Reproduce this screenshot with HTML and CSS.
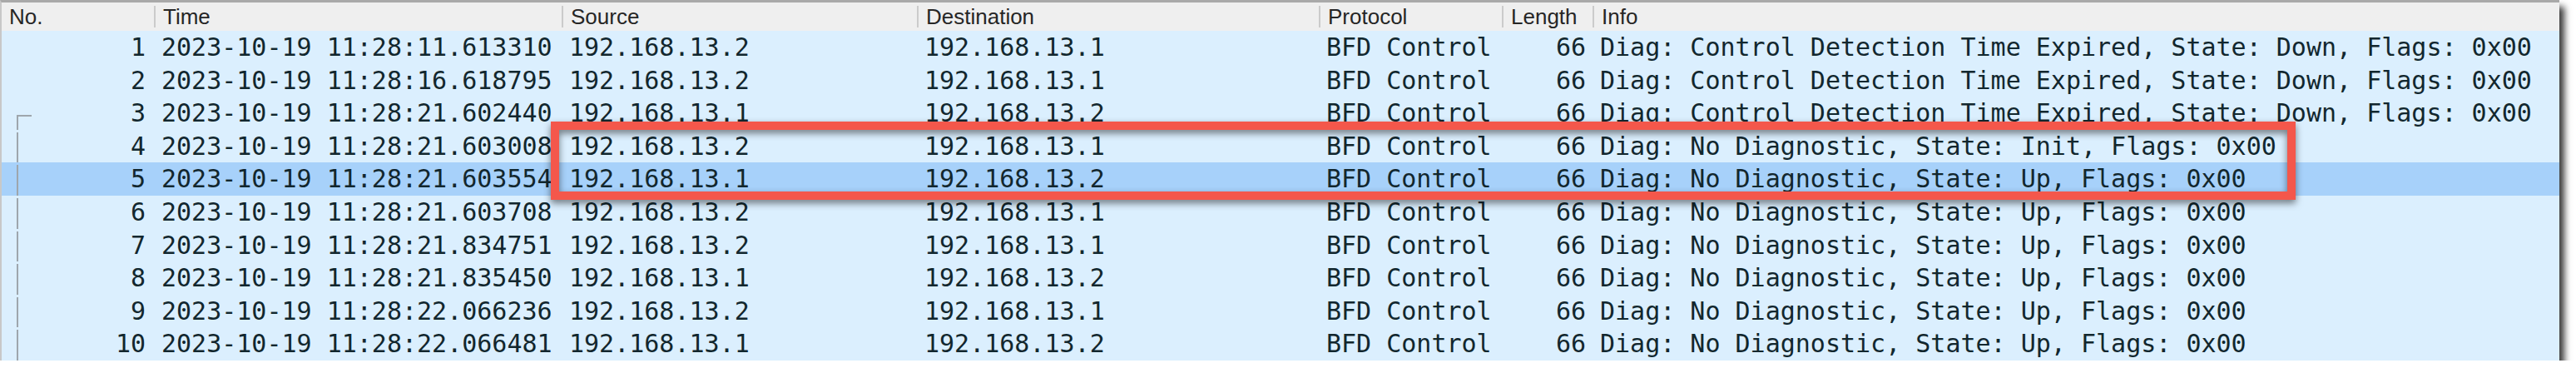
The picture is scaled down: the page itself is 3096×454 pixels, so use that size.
FILE: index.html
```html
<!DOCTYPE html>
<html>
<head>
<meta charset="utf-8">
<link rel="stylesheet" href="styles.css">
</head>
<body>
<div class="window">
  <div class="head grid">
    <div class="h first">No.</div>
    <div class="h">Time</div>
    <div class="h">Source</div>
    <div class="h">Destination</div>
    <div class="h">Protocol</div>
    <div class="h">Length</div>
    <div class="h">Info</div>
  </div>
  <div class="list">
    <div class="row grid"><div class="c num">1</div><div class="c">2023-10-19 11:28:11.613310</div><div class="c">192.168.13.2</div><div class="c">192.168.13.1</div><div class="c">BFD Control</div><div class="c len">66</div><div class="c">Diag: Control Detection Time Expired, State: Down, Flags: 0x00</div></div>
    <div class="row grid"><div class="c num">2</div><div class="c">2023-10-19 11:28:16.618795</div><div class="c">192.168.13.2</div><div class="c">192.168.13.1</div><div class="c">BFD Control</div><div class="c len">66</div><div class="c">Diag: Control Detection Time Expired, State: Down, Flags: 0x00</div></div>
    <div class="row grid"><div class="c num tree-start">3</div><div class="c">2023-10-19 11:28:21.602440</div><div class="c">192.168.13.1</div><div class="c">192.168.13.2</div><div class="c">BFD Control</div><div class="c len">66</div><div class="c">Diag: Control Detection Time Expired, State: Down, Flags: 0x00</div></div>
    <div class="row grid"><div class="c num tree">4</div><div class="c">2023-10-19 11:28:21.603008</div><div class="c">192.168.13.2</div><div class="c">192.168.13.1</div><div class="c">BFD Control</div><div class="c len">66</div><div class="c">Diag: No Diagnostic, State: Init, Flags: 0x00</div></div>
    <div class="row grid selected"><div class="c num tree">5</div><div class="c">2023-10-19 11:28:21.603554</div><div class="c">192.168.13.1</div><div class="c">192.168.13.2</div><div class="c">BFD Control</div><div class="c len">66</div><div class="c">Diag: No Diagnostic, State: Up, Flags: 0x00</div></div>
    <div class="row grid"><div class="c num tree">6</div><div class="c">2023-10-19 11:28:21.603708</div><div class="c">192.168.13.2</div><div class="c">192.168.13.1</div><div class="c">BFD Control</div><div class="c len">66</div><div class="c">Diag: No Diagnostic, State: Up, Flags: 0x00</div></div>
    <div class="row grid"><div class="c num tree">7</div><div class="c">2023-10-19 11:28:21.834751</div><div class="c">192.168.13.2</div><div class="c">192.168.13.1</div><div class="c">BFD Control</div><div class="c len">66</div><div class="c">Diag: No Diagnostic, State: Up, Flags: 0x00</div></div>
    <div class="row grid"><div class="c num tree">8</div><div class="c">2023-10-19 11:28:21.835450</div><div class="c">192.168.13.1</div><div class="c">192.168.13.2</div><div class="c">BFD Control</div><div class="c len">66</div><div class="c">Diag: No Diagnostic, State: Up, Flags: 0x00</div></div>
    <div class="row grid"><div class="c num tree">9</div><div class="c">2023-10-19 11:28:22.066236</div><div class="c">192.168.13.2</div><div class="c">192.168.13.1</div><div class="c">BFD Control</div><div class="c len">66</div><div class="c">Diag: No Diagnostic, State: Up, Flags: 0x00</div></div>
    <div class="row grid"><div class="c num tree">10</div><div class="c">2023-10-19 11:28:22.066481</div><div class="c">192.168.13.1</div><div class="c">192.168.13.2</div><div class="c">BFD Control</div><div class="c len">66</div><div class="c">Diag: No Diagnostic, State: Up, Flags: 0x00</div></div>
  </div>
  <div class="highlight"></div>
</div>
</body>
</html>
```

FILE: styles.css
```css
html, body {
  margin: 0;
  padding: 0;
  background: #ffffff;
}

.window {
  position: relative;
  width: 3076px;
  height: 433px;
  box-sizing: border-box;
  border-top: 3px solid #a9a9a9;
  border-left: 2px solid #c8c8c8;
  background: #dbeffe;
  box-shadow: 6px 8px 8px rgba(0, 0, 0, 0.78);
  overflow: hidden;
}

.grid {
  display: grid;
  grid-template-columns: 183px 490px 427px 483px 220px 109px 1fr;
}

.head {
  height: 34px;
  background: #efefef;
  align-items: center;
  font-family: "Liberation Sans", Arial, sans-serif;
  font-size: 26px;
  color: #262626;
}

.h {
  height: 26px;
  display: flex;
  align-items: center;
  border-left: 2px solid #cbcbcb;
  padding-left: 9px;
  white-space: nowrap;
  line-height: 1;
}

.h.first {
  border-left: none;
  padding-left: 9px;
}

.list {
  font-family: "DejaVu Sans Mono", "Liberation Mono", monospace;
  font-size: 30px;
  color: #12272e;
}

.row {
  height: 39.6px;
  align-items: center;
  background: #dbeffe;
}

.row.selected {
  background: #a7d1fa;
}

.c {
  padding-left: 9px;
  white-space: nowrap;
  line-height: 39.6px;
  height: 39.6px;
}

.num {
  position: relative;
  text-align: right;
  padding-left: 0;
  padding-right: 10px;
}

.len {
  text-align: right;
  padding-left: 0;
  padding-right: 8px;
}

.tree-start::before {
  content: "";
  position: absolute;
  left: 18px;
  top: 22px;
  width: 18px;
  height: 2px;
  background: #9ea6ad;
}

.tree-start::after {
  content: "";
  position: absolute;
  left: 18px;
  top: 22px;
  bottom: 0;
  width: 2px;
  background: #9ea6ad;
}

.tree::after {
  content: "";
  position: absolute;
  left: 18px;
  top: 3px;
  bottom: 0;
  width: 2px;
  background: #9ea6ad;
}

.highlight {
  position: absolute;
  left: 660px;
  top: 143px;
  width: 2097px;
  height: 94px;
  box-sizing: border-box;
  border: 10px solid #f4574b;
  filter: drop-shadow(0 4px 4px rgba(0, 0, 0, 0.5));
}
```
